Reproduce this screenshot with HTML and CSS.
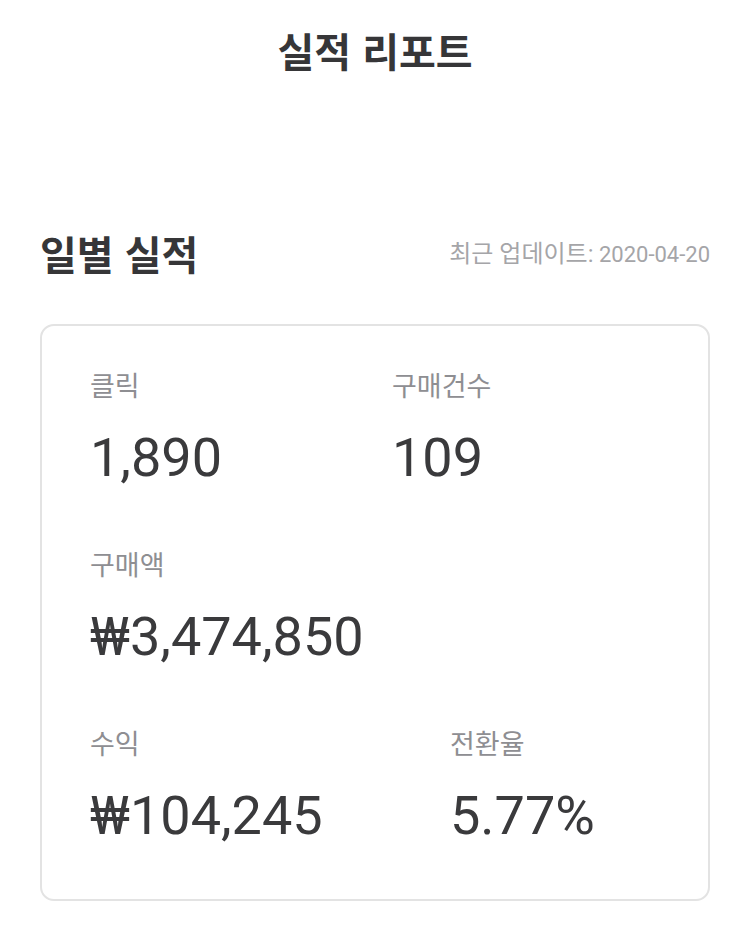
FILE: index.html
```html
<!DOCTYPE html>
<html lang="ko">

<head>
    <meta charset="UTF-8">
    <meta name="viewport" content="width=device-width, initial-scale=1.0">
    <title>실적 리포트</title>
    <link rel="stylesheet" href="styles.css">
</head>

<body>
    <div class="page">
        <h1 class="title">실적 리포트</h1>

        <!-- daily report -->
        <div class="sectionHead">
            <h2>일별 실적</h2>
            <span class="updated"><span class="ko">최근 업데이트:</span> 2020-04-20</span>
        </div>

        <div class="card">
            <div class="row row-narrow">
                <div class="stat">
                    <span class="label">클릭</span>
                    <span class="value">1,890</span>
                </div>
                <div class="stat">
                    <span class="label">구매건수</span>
                    <span class="value">109</span>
                </div>
            </div>
            <div class="row">
                <div class="stat">
                    <span class="label">구매액</span>
                    <span class="value">₩3,474,850</span>
                </div>
            </div>
            <div class="row row-wide">
                <div class="stat">
                    <span class="label">수익</span>
                    <span class="value">₩104,245</span>
                </div>
                <div class="stat">
                    <span class="label">전환율</span>
                    <span class="value">5.77%</span>
                </div>
            </div>
        </div>
    </div>
</body>

</html>
```

FILE: styles.css
```css
body {
    margin: 0;
    padding: 0;
    background: #fff;
    font-family: Roboto, "Noto Sans CJK KR", sans-serif;
    color: #3a3a3c;
}

.page {
    padding: 0 40px;
}

.title {
    margin: 0;
    padding-top: 24px;
    font-family: "Noto Sans CJK KR", sans-serif;
    font-size: 40px;
    font-weight: 700;
    line-height: 52px;
    text-align: center;
    color: #363638;
}

.sectionHead {
    display: flex;
    justify-content: space-between;
    align-items: center;
    margin-top: 151px;
    height: 52px;
}

.sectionHead h2 {
    margin: 0;
    font-family: "Noto Sans CJK KR", sans-serif;
    font-size: 40px;
    font-weight: 700;
    line-height: 52px;
    color: #363638;
}

.updated {
    font-size: 22px;
    color: #a5a5a8;
    margin-top: -4px;
}

.updated .ko {
    font-size: 24px;
}

.card {
    margin-top: 45px;
    border: 2px solid #e3e3e3;
    border-radius: 14px;
    padding: 44px 48px 53px;
}

.row {
    display: grid;
    grid-template-columns: 1fr;
}

.row + .row {
    margin-top: 61px;
}

.row-narrow {
    grid-template-columns: 302px 1fr;
}

.row-wide {
    grid-template-columns: 360px 1fr;
}

.stat {
    display: flex;
    flex-direction: column;
}

.label {
    font-size: 27px;
    line-height: 34px;
    color: #8e8e92;
}

.value {
    margin-top: 24px;
    font-size: 54px;
    line-height: 60px;
    color: #3a3a3c;
}
```
